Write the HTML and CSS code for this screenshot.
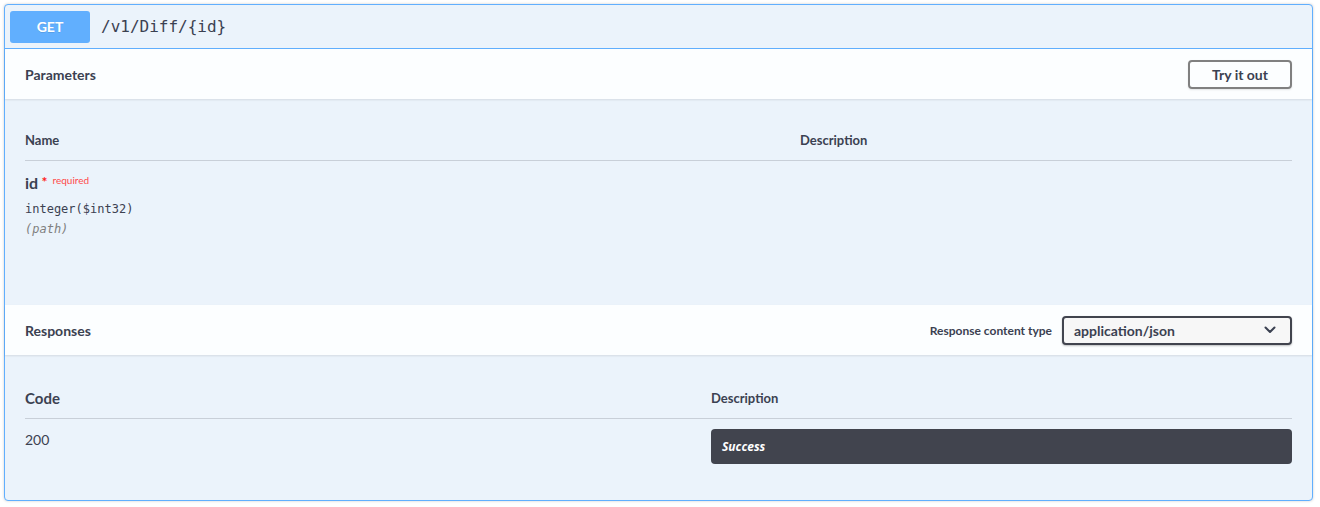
FILE: index.html
```html
<!DOCTYPE html>
<html>
<head>
<meta charset="utf-8">
<link rel="stylesheet" href="styles.css">
</head>
<body>
<div class="opblock">
  <div class="summary">
    <span class="method">GET</span>
    <span class="path">/v1/Diff/{id}</span>
  </div>
  <div class="section-header">
    <h4>Parameters</h4>
    <button class="try-btn">Try it out</button>
  </div>
  <div class="table-container params">
    <div class="row head">
      <div class="col-name">Name</div>
      <div class="col-desc">Description</div>
    </div>
    <div class="row param">
      <div class="col-name">
        <div class="param-name">id<span class="star">&nbsp;*</span><span class="req">required</span></div>
        <div class="param-type">integer<span class="fmt">($int32)</span></div>
        <div class="param-in">(path)</div>
      </div>
      <div class="col-desc"></div>
    </div>
  </div>
  <div class="section-header">
    <h4>Responses</h4>
    <div class="ctype">
      <label>Response content type</label>
      <div class="select">
        <span>application/json</span>
        <svg width="12" height="8" viewBox="0 0 12 8"><path d="M1.5 1.5 L6 6 L10.5 1.5" fill="none" stroke="#3b4151" stroke-width="2" stroke-linecap="round" stroke-linejoin="round"/></svg>
      </div>
    </div>
  </div>
  <div class="table-container responses">
    <div class="row head">
      <div class="col-code code-head">Code</div>
      <div class="col-rdesc">Description</div>
    </div>
    <div class="row resp">
      <div class="col-code code-val">200</div>
      <div class="col-rdesc">
        <div class="markdown"><em>Success</em></div>
      </div>
    </div>
  </div>
</div>
</body>
</html>
```
FILE: styles.css
```css
* { box-sizing: border-box; }
html, body { margin: 0; padding: 0; background: #ffffff; }
body {
  padding: 4px 7px 7px 4px;
  font-family: "Lato", "Noto Sans", sans-serif;
  color: #3b4151;
}
.opblock {
  border: 1px solid #61affe;
  border-radius: 4px;
  background: #ebf3fb;
  box-shadow: 0 0 3px rgba(0,0,0,.19);
  height: 497px;
}
.summary {
  display: flex;
  align-items: center;
  padding: 5px;
  height: 44px;
  border-bottom: 1px solid #61affe;
}
.method {
  display: flex;
  align-items: center;
  justify-content: center;
  width: 80px;
  height: 32px;
  background: #61affe;
  color: #fff;
  font-weight: 700;
  font-size: 14px;
  border-radius: 3px;
  text-shadow: 0 1px 0 rgba(0,0,0,.1);
}
.path {
  font-family: "DejaVu Sans Mono", monospace;
  font-size: 16px;
  padding: 0 10px 0 11px;
  color: #3b4151;
}
.section-header {
  display: flex;
  align-items: center;
  justify-content: space-between;
  height: 50px;
  padding: 8px 20px;
  background: rgba(255,255,255,.85);
  box-shadow: 0 1px 2px rgba(0,0,0,.1);
  position: relative;
}
.section-header h4 {
  margin: 0;
  font-size: 14px;
  font-weight: 700;
}
.try-btn {
  font-family: inherit;
  font-size: 14px;
  font-weight: 700;
  color: #3b4151;
  background: transparent;
  border: 2px solid #808080;
  border-radius: 4px;
  width: 104px;
  height: 29px;
  padding: 0;
  box-shadow: 0 1px 2px rgba(0,0,0,.1);
}
.table-container { padding: 20px 20px 0 20px; }
.params { height: 206px; }
.responses { height: 143px; }
.row { display: flex; }
.row.head {
  border-bottom: 1px solid rgba(59,65,81,.2);
  font-size: 13px;
  font-weight: 700;
  align-items: center;
}
.params .row.head { height: 42px; padding-top: 1px; }
.col-name { width: 775px; }
.col-desc { flex: 1; }
.param { padding-top: 12px; }
.param-name {
  font-size: 16px;
  font-weight: 700;
  display: flex;
  align-items: flex-start;
  height: 24px;
}
.star { color: #ff2020; font-size: 14px; line-height: 18px; }
.req {
  color: #ff4a4a;
  font-size: 10px;
  font-weight: 400;
  margin-left: 5px;
  line-height: 14px;
}
.param-type {
  font-family: "DejaVu Sans Mono", monospace;
  font-size: 12px;
  margin-top: 5px;
  height: 20px;
}
.param-in {
  font-family: "DejaVu Sans Mono", monospace;
  font-size: 12px;
  font-style: italic;
  color: #808080;
}
.ctype { display: flex; align-items: center; }
.ctype label { font-size: 12px; font-weight: 700; margin-right: 10px; }
.select {
  width: 230px;
  height: 29px;
  border: 2px solid #41444e;
  border-radius: 4px;
  background: #f7f7f7;
  display: flex;
  align-items: center;
  justify-content: space-between;
  padding: 0 14px 0 10px;
  font-size: 14px;
  font-weight: 700;
  box-shadow: 0 1px 2px rgba(0,0,0,.25);
}
.responses .row.head { height: 44px; padding-top: 2px; }
.col-code { width: 686px; }
.col-rdesc { flex: 1; }
.code-head { font-size: 15px; }
.code-val { font-size: 14px; font-weight: 400; padding-top: 2px; }
.resp { padding-top: 10px; }
.markdown {
  background: #41444e;
  color: #fff;
  border-radius: 4px;
  height: 35px;
  display: flex;
  align-items: center;
  padding-left: 11px;
  font-family: "Open Sans", "Noto Sans", sans-serif;
  font-size: 12px;
  font-weight: 700;
}
```
